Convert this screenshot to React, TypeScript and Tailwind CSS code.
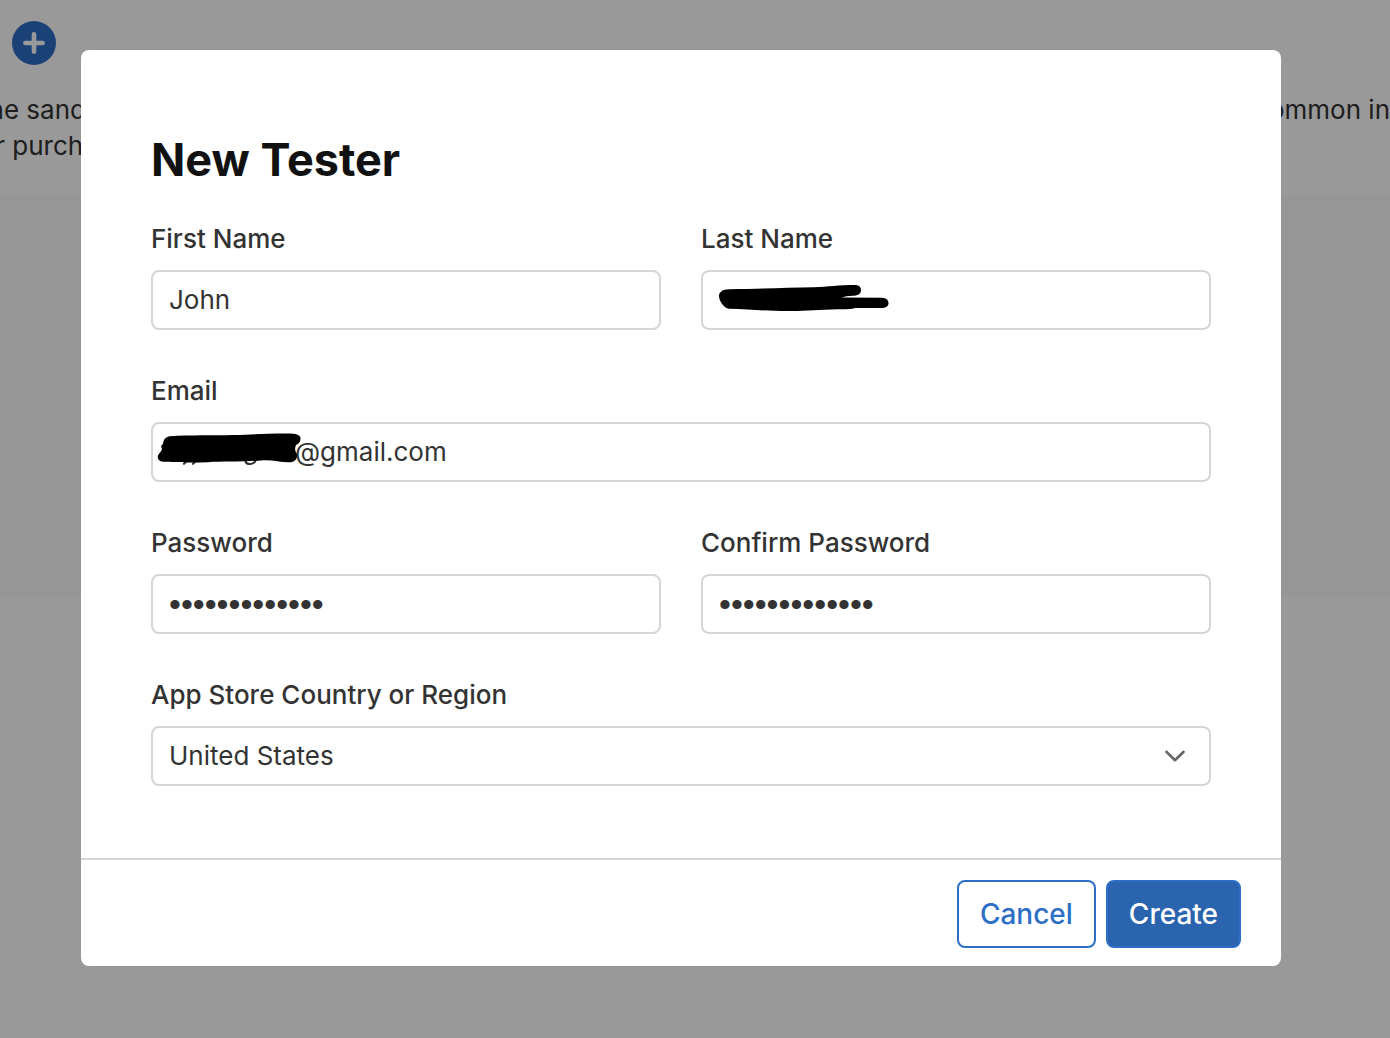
import { useState } from "react";
import type { ReactNode } from "react";

const inputClass =
  "block w-full h-[60px] rounded-lg border-2 border-[#d6d6d6] bg-white px-4 pb-0.5 text-[26px] text-[#333] outline-none focus:border-[#2d6fc7]";

// Liberation Sans has the tighter, rounder bullet
const passwordClass =
  "block w-full h-[60px] rounded-lg border-2 border-[#d6d6d6] bg-white px-4 font-['Liberation_Sans',sans-serif] text-[34px] text-[#333] outline-none focus:border-[#2d6fc7]";

interface FieldProps {
  id: string;
  label: string;
  wide?: boolean;
  children: ReactNode;
}

function Field({ id, label, wide = false, children }: FieldProps) {
  return (
    <div className={wide ? "col-span-2" : "col-span-1"}>
      <label htmlFor={id} className="mb-[14px] block text-[26px] leading-[34px] font-medium text-[#333]">
        {label}
      </label>
      <div className="relative">{children}</div>
    </div>
  );
}

function PageBehind() {
  return (
    <div className="min-h-screen overflow-hidden bg-white">
      <div className="h-[196px] pt-[21px]">
        <button type="button" aria-label="Add tester" className="ml-3 block size-11 rounded-full bg-[#2d6fc7]">
          <svg viewBox="0 0 44 44" className="size-11" fill="none" stroke="#fff" strokeWidth="4.6" strokeLinecap="round">
            <path d="M22 13.4v17.2M13.4 22h17.2" />
          </svg>
        </button>
        <div className="mt-[27px] -ml-5 flex justify-between text-[26px] leading-9 whitespace-nowrap text-[#333]">
          <p>
            the sand
            <br />
            er purch
          </p>
          <p>common in</p>
        </div>
      </div>
      <div className="h-[400px] bg-[#fafafa]" />
    </div>
  );
}

export default function App() {
  const [firstName, setFirstName] = useState("John");
  const [lastName, setLastName] = useState("");
  const [email, setEmail] = useState("@gmail.com");
  const [password, setPassword] = useState("sandboxtester");
  const [confirm, setConfirm] = useState("sandboxtester");
  const [country, setCountry] = useState("United States");

  return (
    <div className="relative font-['Inter',sans-serif]">
      <PageBehind />

      {/* Modal overlay */}
      <div className="absolute inset-0 bg-black/40 pt-[50px] pr-[109px] pl-[81px]">
        <form
          role="dialog"
          aria-labelledby="dialog-title"
          onSubmit={(e) => e.preventDefault()}
          className="overflow-hidden rounded-lg bg-white"
        >
          <div className="px-[70px] pt-[82px] pb-[72px]">
            <h1 id="dialog-title" className="mb-[34px] text-[45px] leading-[56px] font-bold text-[#111]">
              New Tester
            </h1>

            <div className="grid grid-cols-2 gap-x-10 gap-y-11">
              <Field id="first-name" label="First Name">
                <input
                  id="first-name"
                  type="text"
                  value={firstName}
                  onChange={(e) => setFirstName(e.target.value)}
                  className={inputClass}
                />
              </Field>

              <Field id="last-name" label="Last Name">
                <input
                  id="last-name"
                  type="text"
                  value={lastName}
                  onChange={(e) => setLastName(e.target.value)}
                  className={inputClass}
                />
                <svg viewBox="0 0 220 60" className="pointer-events-none absolute top-0 left-0 h-[60px] w-[220px]" aria-hidden="true">
                  <path d="M29 19.3 C60 18.5 85 18 113 17.3 C128 16.8 137 15 154 15 C158 15.1 160 17 160 20 C160 24 157 25.5 152 25.8 C147 26.3 144 26.3 141 27.4 L181 27.8 C185 28 187.5 30 187.5 33 C187.5 36.5 185 38 180 38 L154 38 C150 39.5 143 39.3 137 39.3 C118 39.8 104 41.2 87 41 C66 41 50 39.5 28 38.8 C23 38 18 31 18 26 C18 22 22 19 29 19.3Z" />
                </svg>
              </Field>

              <Field id="email" label="Email" wide>
                <input
                  id="email"
                  type="email"
                  value={email}
                  onChange={(e) => setEmail(e.target.value)}
                  className="block w-full h-[60px] rounded-lg border-2 border-[#d6d6d6] bg-white pr-4 pb-0.5 pl-[142px] text-[26px] text-[#333] outline-none focus:border-[#2d6fc7]"
                />
                <svg viewBox="0 0 220 60" className="pointer-events-none absolute top-0 left-0 h-[60px] w-[220px]" aria-hidden="true">
                  <path
                    d="M33 41.8 L36 39 M42 41.8 L45 39 M94.5 39.5 C96 43 103 43 104.5 38.5"
                    fill="none"
                    stroke="#333"
                    strokeWidth="2.2"
                    strokeLinecap="round"
                  />
                  <path d="M19 14.2 C38 13 62 13.5 82 13 C101 12.7 115 11.4 134 11.4 C142 11.4 149 11.5 149.5 16 C149.5 20 148 21.5 145 23 C143.5 27 144 29 145.5 31 C147.5 36 144 40.5 138 40.3 C128 40.3 121 37.5 110 38.5 C91 40 72 39.3 57 40.2 C39 41 22 40 12 39.8 C8 39.5 6 36.5 7 33.5 C8 31 11 29 11 27 C9.5 24 10.5 23 12 22 C12.5 18 14 14.8 19 14.2Z" />
                </svg>
              </Field>

              <Field id="password" label="Password">
                <input
                  id="password"
                  type="password"
                  value={password}
                  onChange={(e) => setPassword(e.target.value)}
                  className={passwordClass}
                />
              </Field>

              <Field id="confirm-password" label="Confirm Password">
                <input
                  id="confirm-password"
                  type="password"
                  value={confirm}
                  onChange={(e) => setConfirm(e.target.value)}
                  className={passwordClass}
                />
              </Field>

              <Field id="country" label="App Store Country or Region" wide>
                <select
                  id="country"
                  value={country}
                  onChange={(e) => setCountry(e.target.value)}
                  className="block w-full h-[60px] appearance-none rounded-lg border-2 border-[#d6d6d6] bg-white px-4 pb-0.5 text-[26px] text-[#333] outline-none focus:border-[#2d6fc7]"
                >
                  <option>United States</option>
                </select>
                <svg
                  viewBox="0 0 24 24"
                  className="pointer-events-none absolute top-[18px] right-6 size-6"
                  fill="none"
                  stroke="#666"
                  strokeWidth="2.6"
                  strokeLinecap="round"
                  strokeLinejoin="round"
                  aria-hidden="true"
                >
                  <path d="M3.4 7.8l8.6 8.4 8.6-8.4" />
                </svg>
              </Field>
            </div>
          </div>

          {/* Footer */}
          <div className="flex justify-end gap-[10px] border-t-2 border-[#d6d6d6] pt-5 pr-10 pb-[18px]">
            <button
              type="button"
              className="h-[68px] rounded-lg border-2 border-[#2d6fc7] bg-white px-[21px] text-[28px] font-medium text-[#2d6fc7]"
            >
              Cancel
            </button>
            <button
              type="submit"
              className="h-[68px] rounded-lg border-2 border-[#2d6fc7] bg-[#2a64ae] px-[21px] text-[28px] font-medium text-white"
            >
              Create
            </button>
          </div>
        </form>
      </div>
    </div>
  );
}
